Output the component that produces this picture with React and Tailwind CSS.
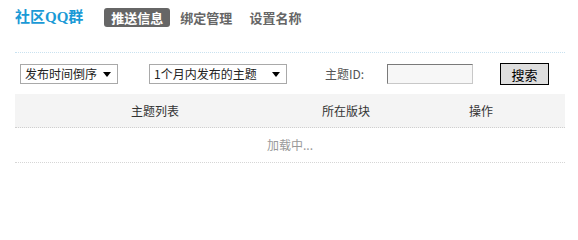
import React from 'react';

const cjk = "font-['Noto_Sans_CJK_SC','Noto_Sans',sans-serif]";

function FakeSelect({ width, label }) {
  return (
    <div
      className={`flex items-center justify-between h-[20px] border border-[#a9a9a9] bg-white pl-[4px] pr-[6px] ${width}`}
    >
      <span className="text-[12px] leading-none text-[#222]">{label}</span>
      <svg width="8" height="5" viewBox="0 0 8 5" className="shrink-0">
        <path d="M0 0h8L4 5z" fill="#000" />
      </svg>
    </div>
  );
}

export default function App() {
  const tabs = ['推送信息', '绑定管理', '设置名称'];

  return (
    <div className={`w-[578px] h-[238px] bg-white ${cjk}`}>
      <div className="ml-[15px] w-[550px] pt-[8px]">
        {/* 顶部标题与导航 */}
        <div className="flex items-center h-[19px]">
          <span className="text-[15px] font-bold leading-none text-[#1a9ad6] font-['Liberation_Serif','Noto_Sans_CJK_SC',serif]">
            社区QQ群
          </span>
          <div className="ml-[21px] flex items-center gap-[3px]">
            {tabs.map((t, i) => (
              <span
                key={t}
                className={`h-[19px] px-[7px] flex items-center rounded-[3px] text-[13px] font-bold leading-none ${
                  i === 0 ? 'bg-[#666] text-white' : 'text-[#666]'
                }`}
              >
                {t}
              </span>
            ))}
          </div>
        </div>

        <div className="mt-[25px] border-t border-dotted border-[#c9e2f0]" />

        {/* 筛选栏 */}
        <div className="mt-[10px] h-[22px] flex items-center">
          <div className="ml-[5px]">
            <FakeSelect width="w-[98px]" label="发布时间倒序" />
          </div>
          <div className="ml-[31px]">
            <FakeSelect width="w-[138px]" label="1个月内发布的主题" />
          </div>
          <span className="ml-[38px] w-[45px] text-[12px] leading-none text-[#555]">主题ID:</span>
          <input
            type="text"
            className="ml-[17px] w-[86px] h-[20px] bg-[#f7f7f7] border border-[#c8c8c8] border-t-[#7a7a7a] border-l-[#7a7a7a] outline-none"
          />
          <button className="ml-[27px] w-[49px] h-[22px] bg-[#dedede] border border-black text-[13px] leading-none text-black">
            搜索
          </button>
        </div>

        {/* 列表 */}
        <div className="mt-[9px]">
          <div className="flex h-[34px] items-center bg-[#f4f4f4] border-b border-dotted border-[#cfcfcf] text-[12px] text-[#333]">
            <div className="w-[280px] text-center">主题列表</div>
            <div className="w-[102px] text-center">所在版块</div>
            <div className="flex-1 text-center">操作</div>
          </div>
          <div className="h-[35px] flex items-center justify-center border-b border-dotted border-[#d6d6d6] text-[12px] text-[#999]">
            加载中...
          </div>
        </div>
      </div>
    </div>
  );
}
